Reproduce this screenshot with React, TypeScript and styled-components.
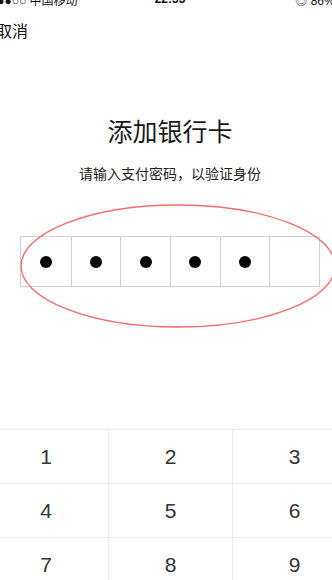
import React from 'react'
import styled, { createGlobalStyle } from 'styled-components'

const GlobalStyle = createGlobalStyle`
  html, body {
    margin: 0;
    padding: 0;
    background: #fff;
    overflow: hidden;
    font-family: 'Liberation Sans', 'Noto Sans CJK SC', sans-serif;
  }
`

const Page = styled.div`
  width: 372px;
  margin-left: -16px;
  display: flex;
  flex-direction: column;
  background: #fff;
`

const StatusBar = styled.div`
  height: 20px;
  margin-top: -11px;
  padding: 0 6px;
  display: flex;
  align-items: center;
  justify-content: space-between;
  font-size: 12px;
  color: #111;
  span {
    flex: 1;
  }
  span:nth-child(2) {
    text-align: center;
    font-weight: bold;
  }
  span:last-child {
    text-align: right;
  }
`

const NavBar = styled.div`
  height: 42px;
  display: flex;
  align-items: center;
  padding-left: 12px;
  font-family: 'Noto Sans CJK SC', sans-serif;
  font-size: 16px;
  color: #111;
`

const Title = styled.h1`
  margin: 64px 0 0;
  text-align: center;
  font-family: 'Noto Sans CJK SC', sans-serif;
  font-weight: 400;
  font-size: 25px;
  line-height: 30px;
  color: #1a1a1a;
`

const Subtitle = styled.p`
  margin: 18px 0 0;
  text-align: center;
  font-family: 'Noto Sans CJK SC', sans-serif;
  font-size: 14px;
  line-height: 20px;
  color: #222;
`

const PasswordArea = styled.div`
  position: relative;
  margin: 53px auto 0;
  width: 300px;
`

const Boxes = styled.div`
  display: grid;
  grid-template-columns: repeat(6, 1fr);
  border: 1px solid #d2d2d2;
  height: 51px;
  box-sizing: border-box;
`

const Box = styled.div<{ $first?: boolean }>`
  display: flex;
  align-items: center;
  justify-content: center;
  border-left: ${(p) => (p.$first ? 'none' : '1px solid #d2d2d2')};
`

const Dot = styled.div`
  width: 12px;
  height: 12px;
  border-radius: 50%;
  background: #000;
`

const Ring = styled.svg`
  position: absolute;
  left: 0;
  top: -32px;
  overflow: visible;
  pointer-events: none;
`

const Keypad = styled.div`
  margin-top: 142px;
  display: grid;
  grid-template-columns: repeat(3, 1fr);
  border-top: 1px solid #ececec;
`

const Key = styled.div<{ $col: number }>`
  height: 53px;
  display: flex;
  align-items: center;
  justify-content: center;
  border-bottom: 1px solid #ececec;
  border-left: ${(p) => (p.$col === 0 ? 'none' : '1px solid #ececec')};
  font-family: 'Liberation Sans', sans-serif;
  font-size: 21px;
  color: #333;
`

const keys = ['1', '2', '3', '4', '5', '6', '7', '8', '9', '', '0', '⌫']

export default function App() {
  const filled = 5
  return (
    <Page>
      <GlobalStyle />
      <StatusBar>
        <span>●●●○○ 中国移动 ︎</span>
        <span>22:33</span>
        <span>◎ 86% ▬</span>
      </StatusBar>
      <NavBar>取消</NavBar>
      <Title>添加银行卡</Title>
      <Subtitle>请输入支付密码，以验证身份</Subtitle>
      <PasswordArea>
        <Boxes>
          {Array.from({ length: 6 }).map((_, i) => (
            <Box key={i} $first={i === 0}>
              {i < filled && <Dot />}
            </Box>
          ))}
        </Boxes>
        <Ring width="316" height="124" viewBox="0 0 316 124">
          <ellipse cx="158" cy="62" rx="157" ry="61" fill="none" stroke="#f26b6b" strokeWidth="1.3" />
        </Ring>
      </PasswordArea>
      <Keypad>
        {keys.map((k, i) => (
          <Key key={i} $col={i % 3}>
            {k}
          </Key>
        ))}
      </Keypad>
    </Page>
  )
}
